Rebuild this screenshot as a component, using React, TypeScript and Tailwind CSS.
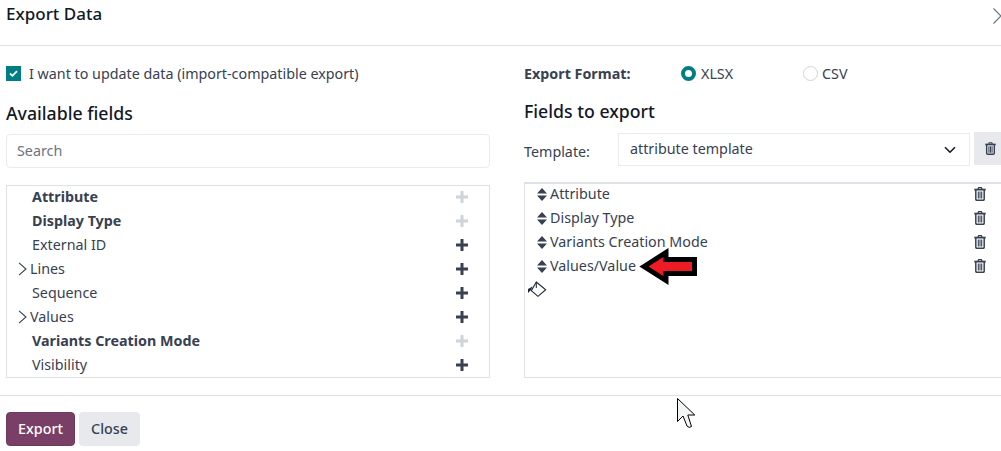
const FONT = "font-['Noto_Sans',sans-serif]";

function Trash({ className = "" }: { className?: string }) {
  return (
    <svg viewBox="0 0 12 14" className={className} fill="none">
      <path d="M4 2 L4.6 .7 H7.4 L8 2" stroke="#374151" strokeWidth="1.3" />
      <path d="M.3 2.6 H11.7" stroke="#374151" strokeWidth="1.8" />
      <path d="M1.8 3 V12.2 Q1.8 13.3 3 13.3 H9 Q10.2 13.3 10.2 12.2 V3" stroke="#374151" strokeWidth="1.5" />
      <path d="M4.3 4.5 V11.5 M6 4.5 V11.5 M7.7 4.5 V11.5" stroke="#374151" strokeWidth="1.1" />
    </svg>
  );
}

function Plus({ muted }: { muted?: boolean }) {
  return (
    <svg viewBox="0 0 12 12" className="w-3 h-3 shrink-0">
      <path d="M6 .5 V11.5 M.5 6 H11.5" stroke={muted ? "#ced4da" : "#374151"} strokeWidth="3" strokeLinecap="round" />
    </svg>
  );
}

function Chevron() {
  return (
    <svg viewBox="0 0 9 14" className="w-[9px] h-[14px] shrink-0">
      <path d="M1 .8 L8 7 L1 13.2" fill="none" stroke="#374151" strokeWidth="1.1" />
    </svg>
  );
}

function Sort() {
  return (
    <svg viewBox="0 0 10 13" className="w-[10px] h-[13px] shrink-0">
      <path d="M5 0 L10 5.4 H0 Z M0 7.6 H10 L5 13 Z" fill="#374151" />
    </svg>
  );
}

const available = [
  { label: "Attribute", bold: true },
  { label: "Display Type", bold: true },
  { label: "External ID" },
  { label: "Lines", chevron: true },
  { label: "Sequence" },
  { label: "Values", chevron: true },
  { label: "Variants Creation Mode", bold: true },
  { label: "Visibility" },
];

const exported = ["Attribute", "Display Type", "Variants Creation Mode", "Values/Value"];

export default function App() {
  return (
    <div className={`${FONT} relative w-[1001px] h-[451px] overflow-hidden bg-white text-[14.3px] text-[#374151]`}>
      <header className="h-[46px] border-b border-[#dee2e6] pl-[6px] pt-[1px] flex justify-between">
        <h1 className="text-[17px] leading-[26px] font-medium text-[#111827]">Export Data</h1>
        <svg viewBox="0 0 8 16" className="w-2 h-4 mt-[7px] shrink-0">
          <path d="M.5 .5 L8 8 L.5 15.5" fill="none" stroke="#6b7280" strokeWidth="1.2" />
        </svg>
      </header>

      <main className="h-[350px] border-b border-[#dee2e6] pl-[6px] flex">
        <section className="w-[484px] shrink-0">
          <label className="flex items-center gap-2 h-[22px] mt-[17px]">
            <span className="w-[15px] h-[15px] -mt-px bg-[#017e84] flex items-center justify-center">
              <svg viewBox="0 0 10 8" className="w-[9px] h-[7px]">
                <path d="M1 4 L3.8 6.6 L9 1.2" fill="none" stroke="#fff" strokeWidth="2" />
              </svg>
            </span>
            <span>I want to update data (import-compatible export)</span>
          </label>
          <h2 className="text-[17.7px] leading-[26px] font-medium text-[#111827] mt-[15px]">Available fields</h2>
          <div className="h-[34px] mt-[8px] border border-[#e9ecef] rounded-[4px] flex items-center pl-[10px] text-[#6b7280]">Search</div>
          <ul className="h-[193px] mt-[17px] border border-[#dee2e6] overflow-hidden">
            {available.map((f, i) => (
              <li key={f.label} className={`h-6 flex items-center pr-[21px] ${i === 0 ? "-mt-px" : ""}`}>
                {f.chevron ? (
                  <span className="flex items-center gap-[3px] pl-[11px]"><Chevron /><span>{f.label}</span></span>
                ) : (
                  <span className={`pl-[25px] ${f.bold ? "font-bold" : ""}`}>{f.label}</span>
                )}
                <span className="ml-auto"><Plus muted={f.bold} /></span>
              </li>
            ))}
          </ul>
        </section>

        <section className="ml-[34px] w-[510px] shrink-0">
          <div className="flex items-center h-[22px] mt-[17px]">
            <span className="font-bold w-[157px]">Export Format:</span>
            <span className="w-[15px] h-[15px] -mt-px rounded-full border-[4px] border-[#017e84] bg-white" />
            <span className="ml-[5px] w-[102px]">XLSX</span>
            <span className="w-[15px] h-[15px] -mt-px rounded-full border border-[#ced4da] bg-white" />
            <span className="ml-[4px]">CSV</span>
          </div>
          <h2 className="text-[17.7px] leading-[26px] font-medium text-[#111827] mt-[13px]">Fields to export</h2>
          <div className="flex mt-[8px] h-[33px]">
            <span className="w-[94px] shrink-0 pt-[9px]">Template:</span>
            <div className="w-[352px] shrink-0 h-[33px] mt-px border border-[#e9ecef] flex items-center pl-[11px] pr-[13px]">
              <span className="-mt-[2px]">attribute template</span>
              <svg viewBox="0 0 12 8" className="w-3 h-2 ml-auto">
                <path d="M1 1.2 L6 6.2 L11 1.2" fill="none" stroke="#111827" strokeWidth="1.6" />
              </svg>
            </div>
            <div className="ml-1 w-[60px] shrink-0 bg-[#e7e9ed] flex items-center pl-[11px]">
              <Trash className="w-[11px] h-[13px]" />
            </div>
          </div>
          <ul className="h-[196px] w-[500px] mt-[17px] border border-[#dee2e6] border-t-2 pl-3 pr-[37px]">
            {exported.map((f, i) => (
              <li key={f} className={`h-6 flex items-center ${i === 0 ? "-mt-[2px]" : ""}`}>
                <Sort />
                <span className="ml-[3px]">{f}</span>
                <Trash className="ml-auto w-[12px] h-[14px]" />
              </li>
            ))}
          </ul>
        </section>
      </main>

      <footer className="flex items-start gap-1 pl-[6px] pt-4">
        <button className="w-[69px] h-[34px] rounded-[4px] bg-[#7a3f66] border border-[#6f3a5d] text-white font-medium">Export</button>
        <button className="w-[61px] h-[34px] rounded-[4px] bg-[#e7e9ed] text-[#374151] font-medium">Close</button>
      </footer>

      {/* Annotation arrow */}
      <svg viewBox="0 0 66 40" className="absolute left-[635px] top-[248px] w-[66px] h-[40px]">
        <path d="M9 18.5 L31 4.5 V11.5 H59.5 V25.5 H31 V32.5 Z" fill="#ed1c24" stroke="#000" strokeWidth="5" strokeLinejoin="miter" strokeMiterlimit="3" />
      </svg>

      {/* Paint-bucket cursor */}
      <svg viewBox="0 0 26 24" className="absolute left-[524px] top-[278px] w-[26px] h-[24px]">
        <path d="M12.3 4 L21.7 11.7 L14 18.3 L7.3 12.7 Z" fill="#fff" stroke="#1f2937" strokeWidth="1.1" />
        <path d="M4 15 V11 L8.5 8.5 L7 12 Z" fill="#1f2937" />
        <path d="M12.3 4 V10" stroke="#1f2937" strokeWidth="1" />
      </svg>

      {/* Mouse pointer */}
      <svg viewBox="0 0 19 31" className="absolute left-[677px] top-[398px] w-[19px] h-[31px]">
        <path d="M.5 .5 V23.5 L6 18 L10 28 Q12 30.5 14.5 28.5 L10.8 17 H17.8 Z" fill="#f3f5f5" stroke="#000" strokeWidth="1" />
      </svg>
    </div>
  );
}
